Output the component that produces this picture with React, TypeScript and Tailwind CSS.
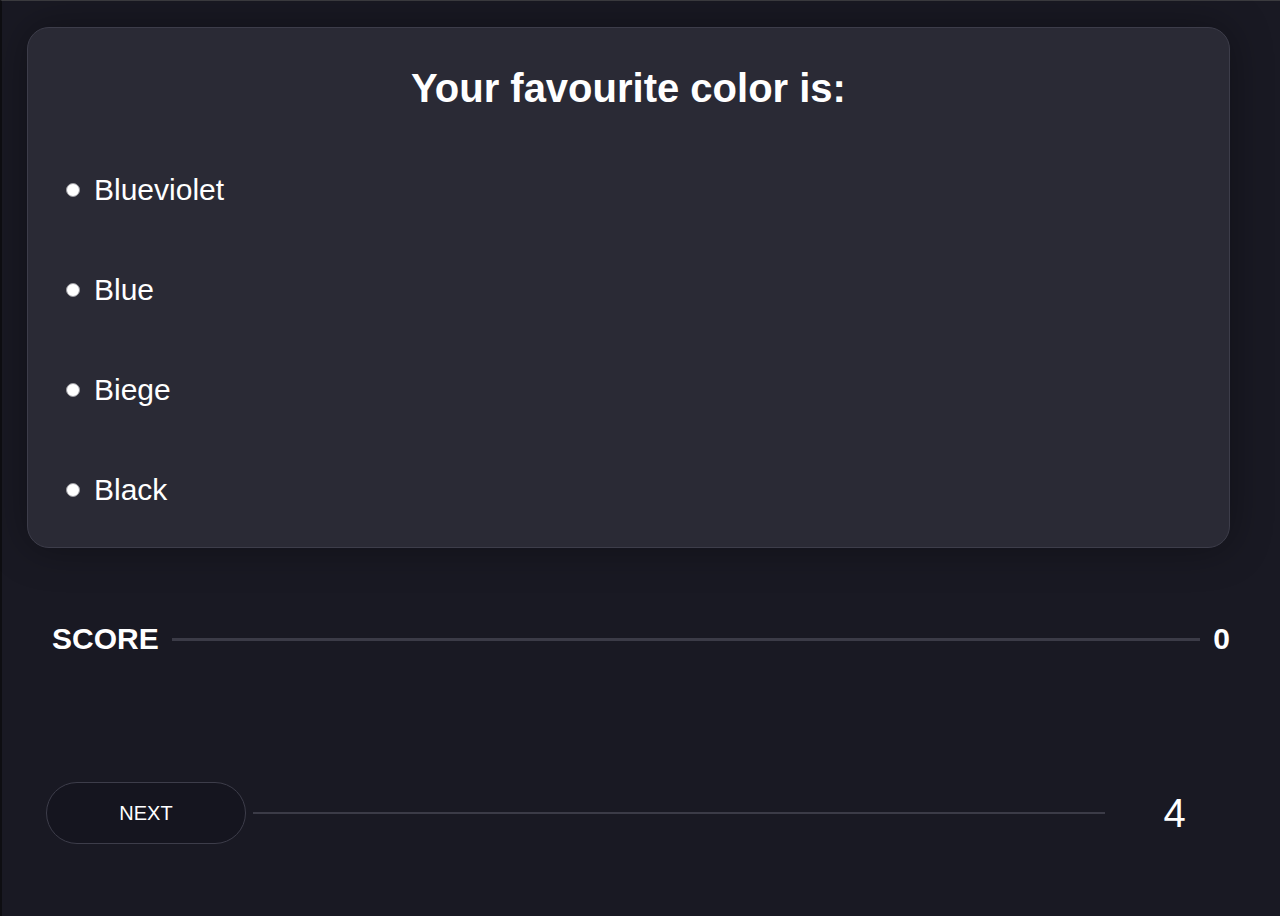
import React, {useState} from "react";

const options = ["Blueviolet", "Blue", "Biege", "Black"];

export default function App() {
    const [picked, setPicked] = useState<string | null>(null);
    const [score] = useState(0);
    const [left] = useState(4);

    return (
        <div
            className="min-h-[916px] w-full bg-[#191923] border-t border-[#3b3b3f] border-l-2 border-l-[#0e0e12] text-white"
            style={{fontFamily: '"Liberation Sans", Arial, sans-serif'}}
        >
            <div className="pt-[26px] pl-[25px] w-[1230px]">
                {/* question card */}
                <div className="w-[1203px] h-[521px] rounded-[22px] bg-[#2a2a35] border border-[#3d3d4a] shadow-[0_0_40px_rgba(0,0,0,0.35)] flex flex-col">
                    <h1 className="text-center font-bold text-[40px] leading-none pt-[40px]">
                        Your favourite color is:
                    </h1>
                    <ul className="flex flex-col pt-[57px] pl-[38px]">
                        {options.map((o) => (
                            <li key={o} className="h-[100px] flex items-start">
                                <label className="flex items-center h-[50px] cursor-pointer" onClick={() => setPicked(o)}>
                                    <span className="w-[14px] h-[14px] rounded-full bg-white border border-[#9a9aa0] flex items-center justify-center mr-[14px]">
                                        {picked === o && <span className="w-[5px] h-[5px] rounded-full bg-[#2a2a35]"></span>}
                                    </span>
                                    <span className="text-[30px] leading-none">{o}</span>
                                </label>
                            </li>
                        ))}
                    </ul>
                </div>

                {/* score */}
                <div className="flex items-center mt-[75px] pl-[25px] pr-[2px] h-[32px]">
                    <span className="font-bold text-[30px] leading-none">SCORE</span>
                    <div className="flex-1 h-[3px] bg-[#3b3b47] ml-[13px] mr-[13px]"></div>
                    <span className="font-bold text-[30px] leading-none">{score}</span>
                </div>

                {/* next */}
                <div className="flex items-center mt-[127px] pl-[19px] h-[62px]">
                    <button className="shrink-0 w-[200px] h-[62px] rounded-full border border-[#3d3d4a] bg-[#15151f] text-[20px] text-white leading-none">
                        NEXT
                    </button>
                    <div className="flex-1 h-[2px] bg-[#3b3b47] ml-[7px]"></div>
                    <span className="shrink-0 w-[127px] pl-[12px] text-center text-[40px] leading-none">{left}</span>
                </div>
            </div>
        </div>
    );
}
